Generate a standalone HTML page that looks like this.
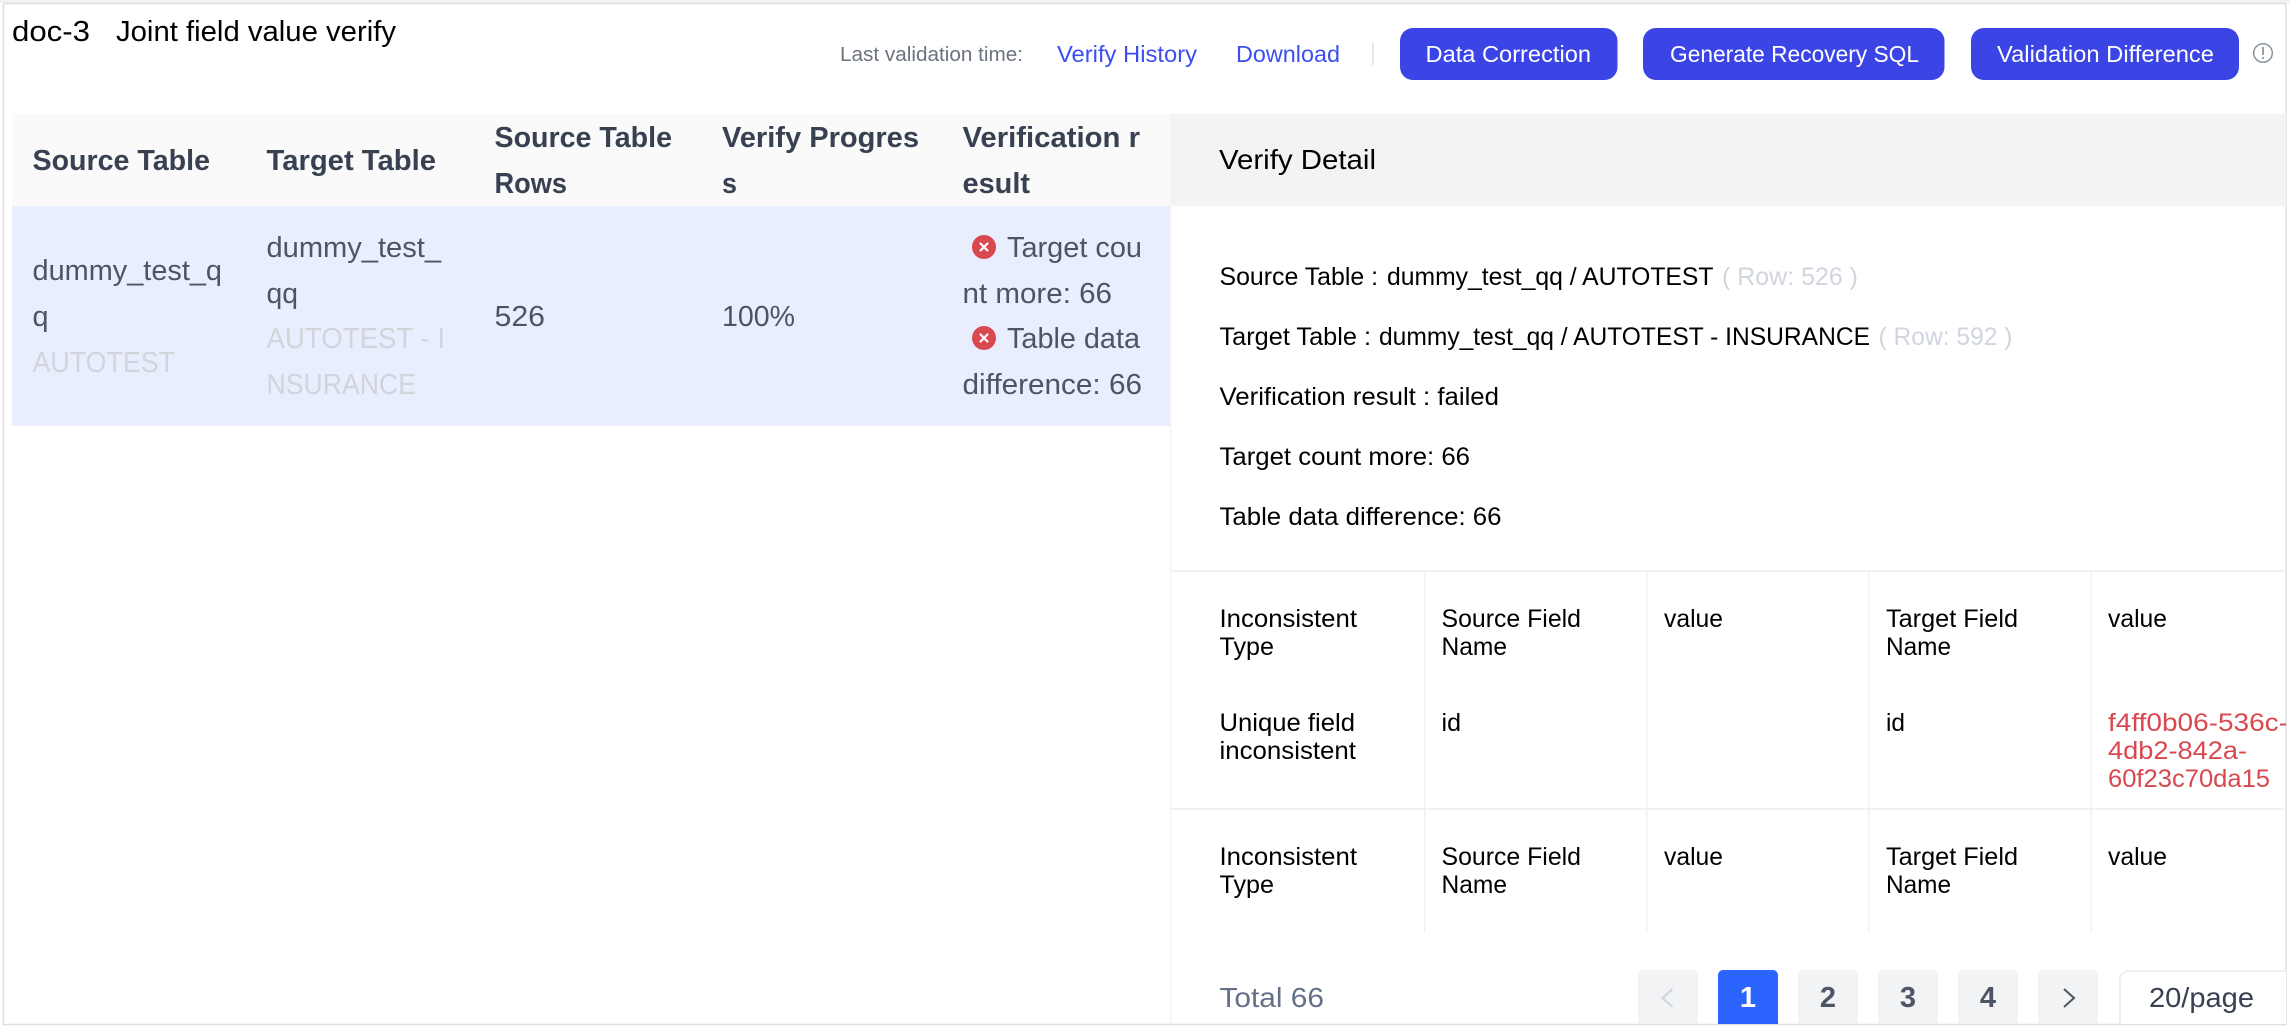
<!DOCTYPE html>
<html lang="en"><head><meta charset="utf-8"><title>Joint field value verify</title>
<style>
html,body{margin:0;padding:0;background:#fff;width:2290px;height:1028px;overflow:hidden}
svg{display:block}
text{font-family:"Liberation Sans",sans-serif;white-space:pre}
.h{font-size:29px;font-weight:700;fill:#374151}
.r{font-size:29px;fill:#4b5563}
.g{font-size:29px;fill:#d1d5db}
.d{font-size:25px;fill:#000}
.m{font-size:25px;fill:#d1d5e0}
.l{font-size:23px;fill:#3b4ef0}
.b{font-size:23px;fill:#fff}
.n{font-size:29px;font-weight:700;fill:#4b5563;text-anchor:middle}
</style></head><body>
<svg xmlns="http://www.w3.org/2000/svg" width="2290" height="1028" viewBox="0 0 2290 1028">
<defs><clipPath id="c"><rect x="1170" y="206" width="1116" height="818"/></clipPath></defs>
<rect width="2290" height="1028" fill="#fff"/>
<rect x="0" y="0" width="2290" height="3" fill="#f1f1f1"/>
<rect x="3.5" y="3.5" width="2282.5" height="1021" fill="#fff" stroke="#dedede" stroke-width="1.5"/>

<!-- title -->
<text x="12" y="41" font-size="29" fill="#000" textLength="78" lengthAdjust="spacingAndGlyphs">doc-3</text>
<text x="116" y="41" font-size="29" fill="#000" textLength="280" lengthAdjust="spacingAndGlyphs">Joint field value verify</text>

<!-- toolbar -->
<text x="840" y="61" font-size="20" fill="#6b7280" textLength="183" lengthAdjust="spacingAndGlyphs">Last validation time:</text>
<text class="l" x="1057" y="62" textLength="140" lengthAdjust="spacingAndGlyphs">Verify History</text>
<text class="l" x="1236" y="62" textLength="104" lengthAdjust="spacingAndGlyphs">Download</text>
<rect x="1372" y="43" width="2" height="22" fill="#e5e7eb"/>
<rect x="1400" y="28" width="217.5" height="52" rx="13" fill="#3b45e6"/>
<text class="b" x="1425.5" y="62" textLength="165.5" lengthAdjust="spacingAndGlyphs">Data Correction</text>
<rect x="1643" y="28" width="301.5" height="52" rx="13" fill="#3b45e6"/>
<text class="b" x="1670" y="62" textLength="249" lengthAdjust="spacingAndGlyphs">Generate Recovery SQL</text>
<rect x="1971" y="28" width="268" height="52" rx="13" fill="#3b45e6"/>
<text class="b" x="1997" y="62" textLength="217" lengthAdjust="spacingAndGlyphs">Validation Difference</text>
<circle cx="2263" cy="53" r="9.3" fill="none" stroke="#8b93a1" stroke-width="1.5"/>
<path d="M2263 47v8" stroke="#8b93a1" stroke-width="1.8" fill="none"/>
<circle cx="2263" cy="58" r="1.1" fill="#8b93a1"/>

<!-- left table -->
<rect x="12" y="114" width="1158" height="92" fill="#fafafb"/>
<rect x="12" y="206" width="1158.5" height="219" fill="#e8eefe"/>
<rect x="12" y="425" width="1158.5" height="1" fill="#eef0f5"/>
<text class="h" x="32.5" y="170" textLength="177.5" lengthAdjust="spacingAndGlyphs">Source Table</text>
<text class="h" x="266.5" y="170" textLength="169.5" lengthAdjust="spacingAndGlyphs">Target Table</text>
<text class="h" x="494.5" y="147" textLength="177.5" lengthAdjust="spacingAndGlyphs">Source Table</text>
<text class="h" x="494.5" y="193" textLength="72.5" lengthAdjust="spacingAndGlyphs">Rows</text>
<text class="h" x="722" y="147" textLength="197" lengthAdjust="spacingAndGlyphs">Verify Progres</text>
<text class="h" x="722" y="193" textLength="15" lengthAdjust="spacingAndGlyphs">s</text>
<text class="h" x="962.5" y="147" textLength="177.5" lengthAdjust="spacingAndGlyphs">Verification r</text>
<text class="h" x="962.5" y="193" textLength="67.5" lengthAdjust="spacingAndGlyphs">esult</text>

<text class="r" x="32.5" y="280" textLength="189.5" lengthAdjust="spacingAndGlyphs">dummy_test_q</text>
<text class="r" x="32.5" y="326" textLength="16" lengthAdjust="spacingAndGlyphs">q</text>
<text class="g" x="32.5" y="372" textLength="142.5" lengthAdjust="spacingAndGlyphs">AUTOTEST</text>
<text class="r" x="266.5" y="257" textLength="174.5" lengthAdjust="spacingAndGlyphs">dummy_test_</text>
<text class="r" x="266.5" y="303" textLength="31.5" lengthAdjust="spacingAndGlyphs">qq</text>
<text class="g" x="266.5" y="348" textLength="178.5" lengthAdjust="spacingAndGlyphs">AUTOTEST - I</text>
<text class="g" x="266.5" y="394" textLength="149.5" lengthAdjust="spacingAndGlyphs">NSURANCE</text>
<text class="r" x="494.5" y="326" textLength="50.5" lengthAdjust="spacingAndGlyphs">526</text>
<text class="r" x="722" y="326" textLength="73" lengthAdjust="spacingAndGlyphs">100%</text>

<circle cx="984" cy="247" r="12" fill="#d9484f"/>
<path d="M980.5 243.5l7 7M987.5 243.5l-7 7" stroke="#fff" stroke-width="2.2" stroke-linecap="round"/>
<text class="r" x="1007" y="257" textLength="135" lengthAdjust="spacingAndGlyphs">Target cou</text>
<text class="r" x="962.5" y="303" textLength="149.5" lengthAdjust="spacingAndGlyphs">nt more: 66</text>
<circle cx="984" cy="338" r="12" fill="#d9484f"/>
<path d="M980.5 334.5l7 7M987.5 334.5l-7 7" stroke="#fff" stroke-width="2.2" stroke-linecap="round"/>
<text class="r" x="1007" y="348" textLength="133" lengthAdjust="spacingAndGlyphs">Table data</text>
<text class="r" x="962.5" y="394" textLength="179.5" lengthAdjust="spacingAndGlyphs">difference: 66</text>

<!-- detail panel -->
<rect x="1170" y="114" width="1116" height="92" fill="#f2f3f5"/>
<text x="1219" y="169" font-size="28" fill="#000" textLength="157" lengthAdjust="spacingAndGlyphs">Verify Detail</text>
<rect x="1170" y="206" width="1.5" height="818" fill="#f3f4f6"/>

<text class="d" x="1219.5" y="285" textLength="158.5" lengthAdjust="spacingAndGlyphs">Source Table :</text>
<text class="d" x="1387" y="285" textLength="326.5" lengthAdjust="spacingAndGlyphs">dummy_test_qq / AUTOTEST</text>
<text class="m" x="1722" y="285" textLength="136" lengthAdjust="spacingAndGlyphs">( Row: 526 )</text>
<text class="d" x="1219.5" y="345" textLength="151.5" lengthAdjust="spacingAndGlyphs">Target Table :</text>
<text class="d" x="1379" y="345" textLength="491" lengthAdjust="spacingAndGlyphs">dummy_test_qq / AUTOTEST - INSURANCE</text>
<text class="m" x="1878.5" y="345" textLength="134" lengthAdjust="spacingAndGlyphs">( Row: 592 )</text>
<text class="d" x="1219.5" y="405" textLength="279.5" lengthAdjust="spacingAndGlyphs">Verification result : failed</text>
<text class="d" x="1219.5" y="465" textLength="250.5" lengthAdjust="spacingAndGlyphs">Target count more: 66</text>
<text class="d" x="1219.5" y="525" textLength="282" lengthAdjust="spacingAndGlyphs">Table data difference: 66</text>

<g fill="#f0f1f3">
<rect x="1170" y="570" width="1116" height="2"/>
<rect x="1170" y="808" width="1116" height="2"/>
<rect x="1424" y="571" width="1.5" height="362"/>
<rect x="1646" y="571" width="1.5" height="362"/>
<rect x="1868" y="571" width="1.5" height="362"/>
<rect x="2090.5" y="571" width="1.5" height="362"/>
</g>
<g clip-path="url(#c)">
<text class="d" x="1219.5" y="627" textLength="137.5" lengthAdjust="spacingAndGlyphs">Inconsistent</text>
<text class="d" x="1219.5" y="655" textLength="54.5" lengthAdjust="spacingAndGlyphs">Type</text>
<text class="d" x="1441.5" y="627" textLength="139.5" lengthAdjust="spacingAndGlyphs">Source Field</text>
<text class="d" x="1441.5" y="655" textLength="65.5" lengthAdjust="spacingAndGlyphs">Name</text>
<text class="d" x="1664" y="627" textLength="59" lengthAdjust="spacingAndGlyphs">value</text>
<text class="d" x="1886" y="627" textLength="132" lengthAdjust="spacingAndGlyphs">Target Field</text>
<text class="d" x="1886" y="655" textLength="65" lengthAdjust="spacingAndGlyphs">Name</text>
<text class="d" x="2108" y="627" textLength="59" lengthAdjust="spacingAndGlyphs">value</text>

<text class="d" x="1219.5" y="731" textLength="135.5" lengthAdjust="spacingAndGlyphs">Unique field</text>
<text class="d" x="1219.5" y="759" textLength="136.5" lengthAdjust="spacingAndGlyphs">inconsistent</text>
<text class="d" x="1441.5" y="731" textLength="19.5" lengthAdjust="spacingAndGlyphs">id</text>
<text class="d" x="1886" y="731" textLength="19" lengthAdjust="spacingAndGlyphs">id</text>
<text class="d" style="fill:#d9484f" x="2108" y="731" textLength="180" lengthAdjust="spacingAndGlyphs">f4ff0b06-536c-</text>
<text class="d" style="fill:#d9484f" x="2108" y="759" textLength="139" lengthAdjust="spacingAndGlyphs">4db2-842a-</text>
<text class="d" style="fill:#d9484f" x="2108" y="787" textLength="162" lengthAdjust="spacingAndGlyphs">60f23c70da15</text>

<text class="d" x="1219.5" y="865" textLength="137.5" lengthAdjust="spacingAndGlyphs">Inconsistent</text>
<text class="d" x="1219.5" y="893" textLength="54.5" lengthAdjust="spacingAndGlyphs">Type</text>
<text class="d" x="1441.5" y="865" textLength="139.5" lengthAdjust="spacingAndGlyphs">Source Field</text>
<text class="d" x="1441.5" y="893" textLength="65.5" lengthAdjust="spacingAndGlyphs">Name</text>
<text class="d" x="1664" y="865" textLength="59" lengthAdjust="spacingAndGlyphs">value</text>
<text class="d" x="1886" y="865" textLength="132" lengthAdjust="spacingAndGlyphs">Target Field</text>
<text class="d" x="1886" y="893" textLength="65" lengthAdjust="spacingAndGlyphs">Name</text>
<text class="d" x="2108" y="865" textLength="59" lengthAdjust="spacingAndGlyphs">value</text>

<!-- pagination -->
<text x="1219.5" y="1007" font-size="28" fill="#64708a" textLength="104.5" lengthAdjust="spacingAndGlyphs">Total 66</text>
<g fill="#f2f3f5">
<rect x="1638" y="970" width="60" height="62" rx="5"/>
<rect x="1798" y="970" width="60" height="62" rx="5"/>
<rect x="1878" y="970" width="60" height="62" rx="5"/>
<rect x="1958" y="970" width="60" height="62" rx="5"/>
<rect x="2038" y="970" width="60" height="62" rx="5"/>
</g>
<rect x="1718" y="970" width="60" height="62" rx="5" fill="#2b64ff"/>
<path d="M1672.5 989l-10 9 10 9" fill="none" stroke="#d1d5db" stroke-width="2"/>
<path d="M2064 989l10 9-10 9" fill="none" stroke="#4b5563" stroke-width="2"/>
<text class="n" style="fill:#fff" x="1748" y="1007">1</text>
<text class="n" x="1828" y="1007">2</text>
<text class="n" x="1908" y="1007">3</text>
<text class="n" x="1988" y="1007">4</text>
<rect x="2120" y="971" width="180" height="60" rx="9" fill="#fff" stroke="#eff0f2" stroke-width="2"/>
<text x="2149" y="1007" font-size="28" fill="#374151" textLength="105" lengthAdjust="spacingAndGlyphs">20/page</text>
</g>
</svg>
</body></html>
